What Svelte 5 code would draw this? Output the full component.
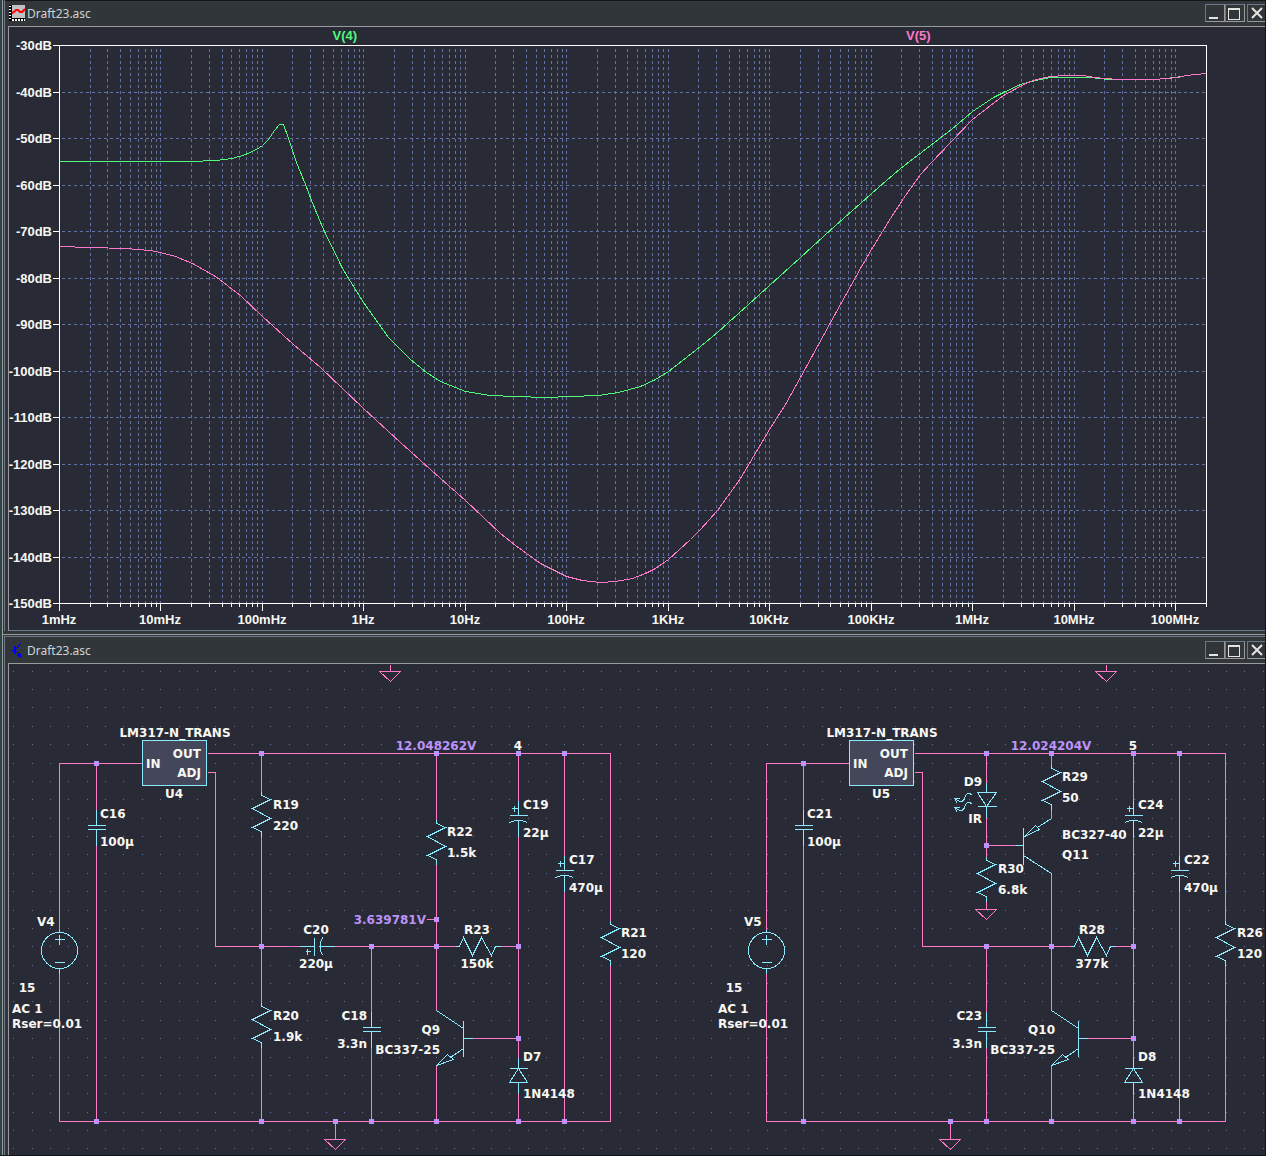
<script lang="ts">
  type Point = [number, number];
  type Anchor = "start" | "middle" | "end";
  type Label = [string, number, number, Anchor?];

  // plot frame, in window pixels
  const left = 59;
  const top = 45;
  const bottom = 603;
  const baseWidth = 1147;
  const decades = 11.304;

  let paneWidth: number = $state(1256);
  let plotWidth = $derived(Math.max(200, paneWidth - 109));
  let right = $derived(left + plotWidth);

  const freqLabels = [
    "1mHz",
    "10mHz",
    "100mHz",
    "1Hz",
    "10Hz",
    "100Hz",
    "1KHz",
    "10KHz",
    "100KHz",
    "1MHz",
    "10MHz",
    "100MHz",
  ];

  const levels = Array.from({ length: 13 }, (_, i) => ({
    text: `${-30 - i * 10}dB`,
    y: Math.round(top + i * 46.5),
  }));

  let ticks = $derived.by(() => {
    const list: { x: number; major: boolean; text: string }[] = [];
    for (let d = 0; d < 12; d++) {
      for (let m = 1; m < 10; m++) {
        const pos = d + Math.log10(m);
        if (pos > decades) break;
        list.push({
          x: Math.round(left + (pos / decades) * plotWidth),
          major: m === 1,
          text: m === 1 ? freqLabels[d] : "",
        });
      }
    }
    return list;
  });

  const v4: Point[] = [
    [59, 161], [190, 161], [215, 160], [232, 158], [245, 154], [256, 149],
    [262, 145], [268, 139], [274, 130], [279, 124], [283, 124], [288, 138],
    [296, 162], [305, 184], [311, 200], [323, 229], [342, 268], [363, 302],
    [388, 337], [410, 359], [426, 372], [440, 381], [465, 391], [490, 395],
    [515, 396], [545, 397], [570, 396], [598, 395], [618, 392], [640, 386],
    [655, 379], [668, 371], [700, 346], [717, 332], [769, 285], [800, 257],
    [835, 225], [860, 203], [871, 193], [900, 168], [930, 145], [951, 129],
    [972, 111], [993, 97], [1003, 92], [1020, 84], [1035, 80], [1050, 77],
    [1075, 77], [1090, 77], [1108, 79], [1135, 79], [1155, 79], [1175, 77],
    [1186, 75], [1206, 73],
  ];

  const v5: Point[] = [
    [59, 246], [90, 247], [125, 248], [150, 250], [160, 252], [175, 256],
    [192, 263], [215, 276], [240, 295], [262, 316], [293, 344], [320, 367],
    [363, 408], [400, 442], [440, 478], [465, 500], [500, 533], [515, 545],
    [540, 563], [566, 576], [582, 580], [600, 582], [615, 581], [632, 578],
    [645, 573], [655, 568], [668, 559], [690, 539], [700, 529], [717, 510],
    [740, 478], [769, 429], [785, 404], [800, 377], [835, 313], [860, 268],
    [871, 249], [890, 218], [905, 195], [920, 174], [930, 163], [951, 141],
    [972, 119], [1003, 95], [1025, 83], [1036, 79], [1050, 76], [1065, 75],
    [1083, 75], [1094, 77], [1105, 78], [1118, 79], [1153, 79], [1167, 78],
    [1177, 77], [1186, 75], [1206, 73],
  ];

  function trace(points: Point[], width: number): string {
    const k = width / baseWidth;
    return points
      .map(([x, y], i) => `${i ? "L" : "M"}${left + (x - left) * k} ${y}`)
      .join("");
  }

  // dot spacing repeats exactly every eight dots
  const dotX = [0, 19, 37, 55, 74, 92, 110, 129];
  const dotY = [0, 18, 36, 55, 73, 92, 110, 128];
  const dots = dotX
    .flatMap((x) => dotY.map((y) => `M${x} ${y}h1v1h-1z`))
    .join("");

  const wires = [
    // left circuit
    "M390 664V671",
    "M142 763H59V929M59 973V1121H610V964",
    "M96 763V809M96 845V1121",
    "M207 753H610V920",
    "M207 772H215V946H299M334 946H455M500 946H518",
    "M261 753V791M261 835V1002M261 1047V1121",
    "M371 946V1011M371 1047V1121",
    "M436 753V819M436 863V1010M436 1065V1121M426 919H436",
    "M518 753V800M518 836V1057M518 1093V1121M472 1038H518",
    "M564 753V855M564 891V1121",
    "M335 1121V1139",
    // right circuit
    "M1106 664V671",
    "M849 763H766V929M766 973V1121H1225V964",
    "M803 763V809M803 845V1121",
    "M914 753H1225V920",
    "M914 772H922V946H1070M1115 946H1133",
    "M986 753V782M986 817V856M986 900V909M986 845H1015",
    "M986 946V1011M986 1047V1121",
    "M1051 753V764M1051 808V818M1051 873V1010M1051 1065V1121",
    "M1133 753V800M1133 836V1057M1133 1093V1121M1087 1038H1133",
    "M1179 753V855M1179 891V1121",
    "M950 1121V1139",
  ];

  const grounds: Point[] = [
    [390, 671],
    [1106, 671],
    [335, 1139],
    [950, 1139],
    [986, 909],
  ];

  const nodes: Point[] = [
    [96, 763], [261, 753], [436, 753], [518, 753], [564, 753],
    [436, 919], [261, 946], [371, 946], [436, 946], [518, 946], [518, 1038],
    [96, 1121], [261, 1121], [335, 1121], [371, 1121], [436, 1121],
    [518, 1121], [564, 1121],
    [803, 763], [986, 753], [1051, 753], [1133, 753], [1179, 753],
    [986, 845], [986, 946], [1051, 946], [1133, 946], [1133, 1038],
    [803, 1121], [950, 1121], [986, 1121], [1051, 1121], [1133, 1121],
    [1179, 1121],
  ];

  const resistors: Point[] = [
    [261, 791], [261, 1002], [436, 819], [610, 920],
    [1051, 764], [986, 856], [1225, 920],
  ];
  const flatResistors: Point[] = [[455, 946], [1070, 946]];
  const caps: Point[] = [[96, 809], [371, 1011], [803, 809], [986, 1011]];
  const polarCaps: Point[] = [[518, 800], [564, 855], [1133, 800], [1179, 855]];
  const sources: Point[] = [[59, 950], [766, 950]];
  const diodes: Point[] = [[518, 1057], [1133, 1057]];
  const npns: Point[] = [[436, 1010], [1051, 1010]];
  const regulators: Point[] = [[142, 740], [849, 740]];

  const labels: Label[] = [
    ["LM317-N_TRANS", 175, 737, "middle"],
    ["IN", 146, 768],
    ["OUT", 201, 758, "end"],
    ["ADJ", 201, 777, "end"],
    ["U4", 174, 798, "middle"],
    ["C16", 100, 818],
    ["100µ", 100, 846],
    ["R19", 273, 809],
    ["220", 273, 830],
    ["4", 518, 750, "middle"],
    ["C19", 523, 809],
    ["22µ", 523, 837],
    ["R22", 447, 836],
    ["1.5k", 447, 857],
    ["C17", 569, 864],
    ["470µ", 569, 892],
    ["V4", 37, 926],
    ["15", 27, 992, "middle"],
    ["AC 1", 12, 1013],
    ["Rser=0.01", 12, 1028],
    ["C20", 316, 934, "middle"],
    ["220µ", 316, 968, "middle"],
    ["R23", 477, 934, "middle"],
    ["150k", 477, 968, "middle"],
    ["R21", 621, 937],
    ["120", 621, 958],
    ["R20", 273, 1020],
    ["1.9k", 273, 1041],
    ["C18", 367, 1020, "end"],
    ["3.3n", 367, 1048, "end"],
    ["Q9", 440, 1034, "end"],
    ["BC337-25", 440, 1054, "end"],
    ["D7", 523, 1061],
    ["1N4148", 523, 1098],
    ["LM317-N_TRANS", 882, 737, "middle"],
    ["IN", 853, 768],
    ["OUT", 908, 758, "end"],
    ["ADJ", 908, 777, "end"],
    ["U5", 881, 798, "middle"],
    ["C21", 807, 818],
    ["100µ", 807, 846],
    ["5", 1133, 750, "middle"],
    ["D9", 982, 786, "end"],
    ["IR", 982, 823, "end"],
    ["R29", 1062, 781],
    ["50", 1062, 802],
    ["C24", 1138, 809],
    ["22µ", 1138, 837],
    ["BC327-40", 1062, 839],
    ["Q11", 1062, 859],
    ["R30", 998, 873],
    ["6.8k", 998, 894],
    ["C22", 1184, 864],
    ["470µ", 1184, 892],
    ["V5", 744, 926],
    ["15", 734, 992, "middle"],
    ["AC 1", 718, 1013],
    ["Rser=0.01", 718, 1028],
    ["R28", 1092, 934, "middle"],
    ["377k", 1092, 968, "middle"],
    ["R26", 1237, 937],
    ["120", 1237, 958],
    ["C23", 982, 1020, "end"],
    ["3.3n", 982, 1048, "end"],
    ["Q10", 1055, 1034, "end"],
    ["BC337-25", 1055, 1054, "end"],
    ["D8", 1138, 1061],
    ["1N4148", 1138, 1098],
  ];

  const voltages: Label[] = [
    ["12.048262V", 436, 750, "middle"],
    ["3.639781V", 426, 924, "end"],
    ["12.024204V", 1051, 750, "middle"],
  ];
</script>

{#snippet windowButtons()}
  <div class="buttons">
    <button aria-label="Minimize">
      <svg width="18" height="16"><rect x="3" y="12" width="9" height="2" /></svg>
    </button>
    <button aria-label="Maximize">
      <svg width="18" height="16">
        <path d="M2 3h12v12h-12zM3 5v9h10v-9z" fill-rule="evenodd" />
      </svg>
    </button>
    <button class="close" aria-label="Close">
      <svg width="17" height="16">
        <path class="cross" d="M4 3L14 13M14 3L4 13" />
      </svg>
    </button>
  </div>
{/snippet}

<main>
  <section class="window">
    <div class="inner">
      <header>
        <svg class="icon" width="16" height="16">
          <rect width="16" height="16" fill="#000" />
          <rect x="3" width="13" height="13" fill="#c0c0c0" />
          <path d="M1 1V14" stroke="#fff" stroke-width="2" stroke-dasharray="1 2" />
          <path d="M3 15H16" stroke="#fff" stroke-width="2" stroke-dasharray="2 1" />
          <path
            d="M3 8L5 7L7 5H9L11 7H13L16 4"
            fill="none"
            stroke="#f00"
            stroke-width="2"
          />
        </svg>
        <h1>Draft23.asc</h1>
        {@render windowButtons()}
      </header>
      <div class="pane plot" bind:clientWidth={paneWidth}>
        <svg width="100%" height="603">
          <g transform="translate(-9 -27)">
            <g class="lines" transform="translate(0.5 0.5)">
              {#each ticks.slice(1) as tick}
                <path class="grid" d="M{tick.x} 48.5V{bottom}" />
              {/each}
              {#each levels.slice(1, -1) as level}
                <path class="grid" d="M{left + 2} {level.y}H{right}" />
              {/each}
              <path class="v4" d={trace(v4, plotWidth)} />
              <path class="v5" d={trace(v5, plotWidth)} />
              <rect
                class="frame"
                x={left}
                y={top}
                width={plotWidth}
                height={bottom - top}
              />
              {#each levels as level}
                <path class="frame" d="M52 {level.y}H{left}" />
              {/each}
              {#each ticks as tick}
                <path class="frame" d="M{tick.x} {bottom}v{tick.major ? 7 : 3}" />
              {/each}
              <path class="frame" d="M{right} {bottom}v3" />
            </g>
            {#each levels as level}
              <text class="axis" x="52" y={level.y + 5} text-anchor="end">
                {level.text}
              </text>
            {/each}
            {#each ticks as tick}
              {#if tick.major}
                <text class="axis" x={tick.x} y="624" text-anchor="middle">
                  {tick.text}
                </text>
              {/if}
            {/each}
            <text
              class="axis green"
              x={left - 1 + plotWidth / 4}
              y="40"
              text-anchor="middle">V(4)</text
            >
            <text
              class="axis pink"
              x={left - 1 + (plotWidth * 3) / 4}
              y="40"
              text-anchor="middle">V(5)</text
            >
          </g>
        </svg>
      </div>
    </div>
  </section>

  <section class="window schematic">
    <div class="inner">
      <header>
        <svg class="icon" width="16" height="16" shape-rendering="crispEdges">
          <g fill="none" stroke="#00f">
            <path d="M2 8H6" stroke-width="1" />
            <path d="M6 4V12" stroke-width="2" />
            <path d="M7 7L12 1M7 9L12 15" stroke-width="1" />
          </g>
          <path d="M13 16L7 14L11 11z" fill="#00f" />
        </svg>
        <h1>Draft23.asc</h1>
        {@render windowButtons()}
      </header>
      <div class="pane sheet">
        <svg width="100%" height="491">
          <defs>
            <pattern
              id="dots"
              x="4"
              y="7"
              width="147"
              height="147"
              patternUnits="userSpaceOnUse"
            >
              <path d={dots} fill="#6272a4" />
            </pattern>
          </defs>
          <rect width="100%" height="100%" fill="url(#dots)" />
          <g transform="translate(-9 -664)">
            <g class="lines" transform="translate(0.5 0.5)">
              <g class="wire">
                {#each wires as d}
                  <path {d} />
                {/each}
                {#each grounds as [x, y]}
                  <path d="M{x - 11} {y}h21l-10 10z" />
                {/each}
              </g>

              <g class="part">
                {#each regulators as [x, y]}
                  <rect class="chip" {x} {y} width="64" height="45" />
                {/each}
                {#each resistors as [x, y]}
                  <path d="M{x} {y}v4l9 4l-18 9l18 10l-18 9l9 4v5" />
                {/each}
                {#each flatResistors as [x, y]}
                  <path d="M{x} {y}h4l4 -9l9 18l9 -18l10 18l4 -9h5" />
                {/each}
                {#each caps as [x, y]}
                  <path d="M{x} {y}v16m-9 0h18m0 4h-18m9 0v16" />
                {/each}
                {#each polarCaps as [x, y]}
                  <path d="M{x} {y}v15m-9 0h18m-9 5v16" />
                  <path d="M{x - 9} {y + 22}q9 -4 18 0" />
                  <path d="M{x - 7} {y + 8}h6m-3 -3v6" />
                {/each}
                {#each sources as [x, y]}
                  <circle cx={x} cy={y} r="18" />
                  <path d="M{x} {y - 21}v3m0 36v5" />
                  <path d="M{x - 5} {y - 11}h10m-5 -5v10m-5 18h10" />
                {/each}
                {#each diodes as [x, y]}
                  <path d="M{x} {y}v11m-9 0h18m-9 0l-9 14h18l-9 -14m0 14v11" />
                {/each}
                {#each npns as [x, y]}
                  <path d="M{x} {y}l27 18m0 -8v36m0 -18h9" />
                  <path d="M{x + 27} {y + 38}l-13 9m-14 8l11 -11l6 5z" />
                {/each}
                <!-- C20 -->
                <path d="M299 946H314M314 937V955M319 946H334M305 951h5m-3 -3v6" />
                <path d="M322 937q-5 9 0 18" />
                <!-- D9 -->
                <path d="M986 782V792M977 792h19l-10 14zM977 806h19M986 806V817" />
                <path d="M972 795q-4 -4 -7 0q-1 6 -5 6l-5 -2m4 -1h-5l3 5" />
                <path d="M972 804q-4 -4 -7 0q-1 6 -5 6l-5 -2m4 -1h-5l3 5" />
                <!-- Q11 -->
                <path d="M1015 845H1023M1023 827V864M1023 855L1051 873V874" />
                <path d="M1051 818L1037 827M1024 836L1035 825L1039 829Z" />
              </g>
            </g>

            {#each nodes as [x, y]}
              <rect class="node" x={x - 2} y={y - 2} width="5" height="5" />
            {/each}
            {#each labels as [text, x, y, anchor]}
              <text class="label" {x} {y} text-anchor={anchor ?? "start"}>{text}</text>
            {/each}
            {#each voltages as [text, x, y, anchor]}
              <text class="label purple" {x} {y} text-anchor={anchor}>{text}</text>
            {/each}
          </g>
        </svg>
      </div>
    </div>
  </section>
</main>

<style>
  :global(body) {
    margin: 0;
    background: #31363b;
  }

  main {
    box-sizing: border-box;
    min-height: 100vh;
    display: flex;
    flex-direction: column;
    padding-left: 2px;
    border-right: 1px solid #141618;
    border-bottom: 1px solid #141618;
    background: #2b4444;
    overflow: hidden;
  }

  .window {
    padding: 0 0 3px 1px;
    border-left: 1px solid #9a9a9a;
    background: #31363b;
    box-shadow: inset 0 1px #141618;
  }

  .inner {
    padding-left: 3px;
    border-left: 1px solid #6e7789;
  }

  .schematic {
    flex: 1;
    padding: 1px 0 0 1px;
    border-top: 1px solid #9a9a9a;
    box-shadow: none;
  }

  .schematic .inner {
    border-top: 1px solid #6e7789;
  }

  header {
    height: 26px;
    display: flex;
    align-items: center;
  }

  .icon {
    margin-left: 1px;
  }

  h1 {
    flex: 1;
    margin: 0 0 0 2px;
    font: 12px "Noto Sans", sans-serif;
    color: #d0d3d4;
  }

  .buttons {
    display: flex;
  }

  button {
    box-sizing: border-box;
    width: 20px;
    height: 18px;
    padding: 0;
    border: 1px solid;
    border-color: #6e7789 #9a9a9a #9a9a9a #6e7789;
    background: none;
    overflow: hidden;
  }

  button svg {
    display: block;
    fill: #e4e4e0;
  }

  .close {
    width: 18px;
    margin-left: 2px;
    border-right: none;
  }

  .cross {
    stroke: #e4e4e0;
    stroke-width: 2;
  }

  .pane {
    border-top: 1px solid #9a9a9a;
    border-left: 1px solid #9a9a9a;
    background: #282a36;
    overflow: hidden;
  }

  .pane svg {
    display: block;
  }

  .plot {
    border-bottom: 1px solid #6e7789;
  }

  .lines {
    fill: none;
    shape-rendering: crispEdges;
  }

  .grid {
    stroke: #6272a4;
    stroke-dasharray: 3;
  }

  .frame {
    stroke: #fff;
  }

  .v4 {
    stroke: #50fa7b;
  }

  .v5 {
    stroke: #ff79c6;
  }

  .axis {
    font: bold 13px "Liberation Sans", sans-serif;
    fill: #f8f8f2;
  }

  .green {
    fill: #50fa7b;
  }

  .pink {
    fill: #ff79c6;
  }

  .wire {
    stroke: #ff79c6;
  }

  .part {
    stroke: #8be9fd;
  }

  .chip {
    fill: #44475a;
  }

  .node {
    fill: #bd93f9;
  }

  .label {
    font: bold 12px "DejaVu Sans", sans-serif;
    fill: #f8f8f2;
  }

  .purple {
    fill: #bd93f9;
  }
</style>
